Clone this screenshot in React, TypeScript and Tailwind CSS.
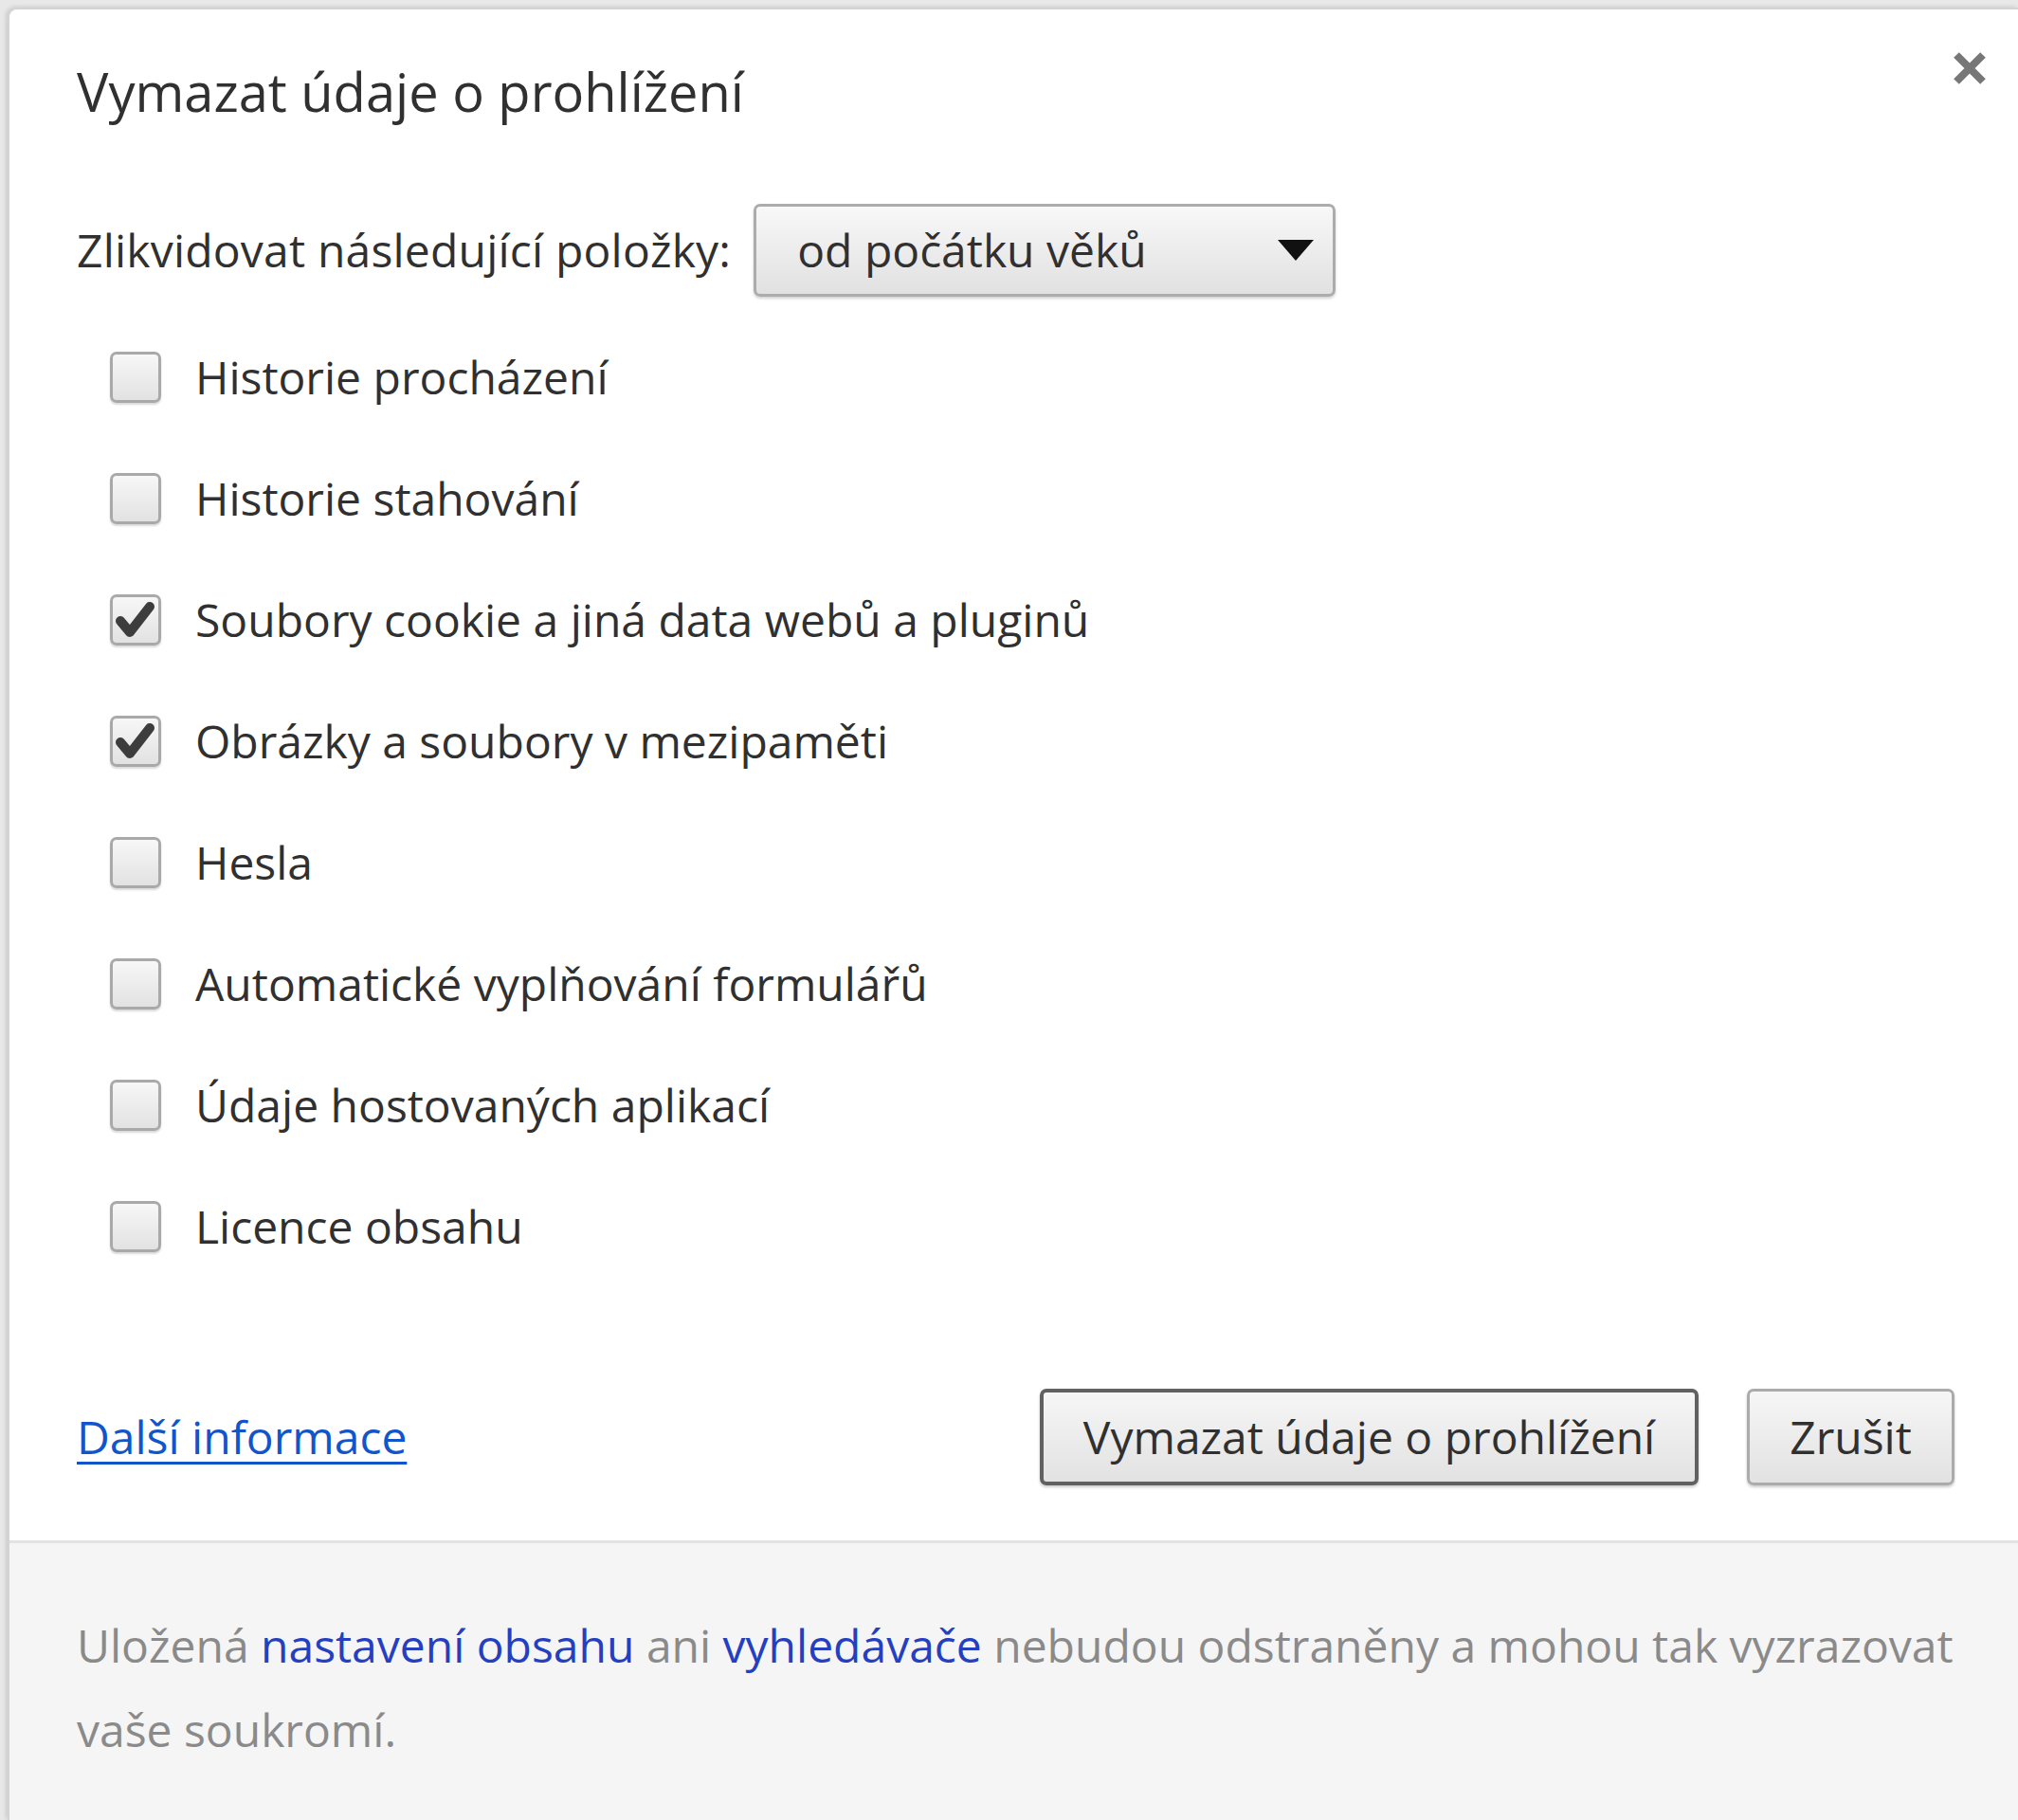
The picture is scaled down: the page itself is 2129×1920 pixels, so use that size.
import { useState } from 'react';

interface ClearItem {
	id: string;
	label: string;
	checked: boolean;
}

const initialItems: ClearItem[] = [
	{ id: 'history', label: 'Historie procházení', checked: false },
	{ id: 'downloads', label: 'Historie stahování', checked: false },
	{ id: 'cookies', label: 'Soubory cookie a jiná data webů a pluginů', checked: true },
	{ id: 'cache', label: 'Obrázky a soubory v mezipaměti', checked: true },
	{ id: 'passwords', label: 'Hesla', checked: false },
	{ id: 'autofill', label: 'Automatické vyplňování formulářů', checked: false },
	{ id: 'hosted', label: 'Údaje hostovaných aplikací', checked: false },
	{ id: 'licenses', label: 'Licence obsahu', checked: false },
];

function CheckBox({ checked, onToggle }: { checked: boolean; onToggle: () => void }) {
	return (
		<button
			onClick={onToggle}
			className="w-[54px] h-[54px] shrink-0 rounded-[7px] border-[3px] border-[#a9a9a9] bg-gradient-to-b from-[#f7f7f7] to-[#e2e2e2] shadow-[0_2px_2px_rgba(0,0,0,0.15)] flex items-center justify-center outline-none cursor-pointer"
		>
			{checked && (
				<svg width="44" height="44" viewBox="0 0 44 44">
					<path d="M6 23 L16 35 L37 8" fill="none" stroke="#3d3d3d" strokeWidth="10" strokeLinejoin="round" strokeLinecap="round" />
				</svg>
			)}
		</button>
	);
}

export default function App() {
	const [items, setItems] = useState(initialItems);

	const toggle = (id: string) =>
		setItems(prev => prev.map(it => (it.id === id ? { ...it, checked: !it.checked } : it)));

	return (
		<div className="w-full h-[1920px] overflow-hidden bg-[#e8e8e8] pt-[8px] pl-[8px] font-['Open_Sans',sans-serif] text-[#303030]">
			<div className="relative h-full bg-white rounded-tl-[10px] border-l-2 border-t-2 border-[#d4d4d4] shadow-[-2px_-1px_4px_rgba(0,0,0,0.12)] flex flex-col">
				{/* Close */}
				<button className="absolute top-[42px] right-[31px] w-[40px] h-[40px] flex items-center justify-center bg-transparent border-none outline-none cursor-pointer">
					<svg width="36" height="34" viewBox="0 0 36 34">
						<path d="M4 3 L32 31 M32 3 L4 31" stroke="#777777" strokeWidth="8" />
					</svg>
				</button>

				<div className="pl-[71px] pr-[67px] pt-[54px]">
					<h1 className="text-[56px] leading-[64px] font-normal">Vymazat údaje o prohlížení</h1>

					<div className="mt-[87px] flex items-center h-[98px]">
						<span className="text-[48px] leading-[64px] tracking-[0.2px]">Zlikvidovat následující položky:</span>
						<div className="ml-[24px] w-[614px] h-[98px] rounded-[7px] border-[3px] border-[#acacac] bg-gradient-to-b from-[#f8f8f8] to-[#e1e1e1] shadow-[0_2px_3px_rgba(0,0,0,0.18)] flex items-center justify-between pl-[43px] pr-[20px]">
							<span className="text-[48px] leading-[64px]">od počátku věků</span>
							<svg width="38" height="22" viewBox="0 0 38 22">
								<path d="M0 0 H38 L19 22 Z" fill="#111111" />
							</svg>
						</div>
					</div>

					<div className="mt-[21px] flex flex-col">
						{items.map(it => (
							<div key={it.id} className="h-[128px] flex items-center pl-[35px] gap-[36px]">
								<CheckBox checked={it.checked} onToggle={() => toggle(it.id)} />
								<span className="text-[48px] leading-[64px]">{it.label}</span>
							</div>
						))}
					</div>

					<div className="mt-[107px] flex items-center justify-between h-[102px]">
						<a href="#" className="text-[48px] leading-[64px] text-[#1155cc] underline decoration-[3px] underline-offset-[8px]">
							Další informace
						</a>
						<div className="flex items-center gap-[51px]">
							<button className="w-[695px] h-[102px] rounded-[7px] border-[4px] border-[#616161] bg-gradient-to-b from-[#f6f6f6] to-[#e2e2e2] shadow-[0_2px_3px_rgba(0,0,0,0.2)] text-[48px] leading-[64px] text-[#303030] cursor-pointer">
								Vymazat údaje o prohlížení
							</button>
							<button className="w-[219px] h-[102px] rounded-[7px] border-[3px] border-[#ababab] bg-gradient-to-b from-[#f6f6f6] to-[#e2e2e2] shadow-[0_2px_3px_rgba(0,0,0,0.2)] text-[48px] leading-[64px] text-[#303030] cursor-pointer">
								Zrušit
							</button>
						</div>
					</div>
				</div>

				<div className="mt-[58px] flex-1 bg-[#f5f5f5] border-t-[3px] border-[#e3e3e3] pl-[71px] pr-[60px] pt-[63px]">
					<p className="text-[48px] leading-[89px] text-[#8a8a8a]">
						Uložená <span className="text-[#2440c0]">nastavení obsahu</span> ani{' '}
						<span className="text-[#2440c0]">vyhledávače</span> nebudou odstraněny a mohou tak vyzrazovat
						<br />
						vaše soukromí.
					</p>
				</div>
			</div>
		</div>
	);
}
